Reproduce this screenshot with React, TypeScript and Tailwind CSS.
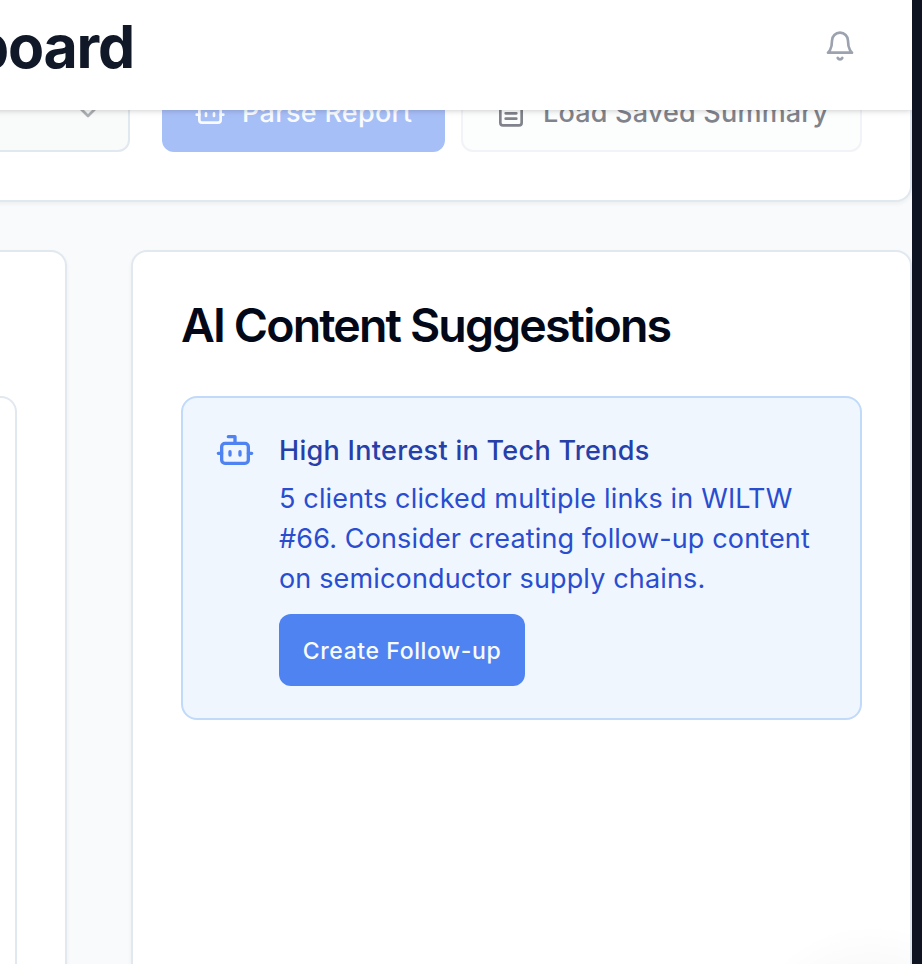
import React from "react";

type IconProps = { className?: string; children: React.ReactNode };

function Icon({ className = "", children }: IconProps) {
  return (
    <svg
      viewBox="0 0 24 24"
      fill="none"
      stroke="currentColor"
      strokeWidth={2}
      strokeLinecap="round"
      strokeLinejoin="round"
      className={`shrink-0 ${className}`}
    >
      {children}
    </svg>
  );
}

function BotIcon({ className }: { className?: string }) {
  return (
    <Icon className={className}>
      <path d="M12 8V4H8" />
      <rect width="16" height="12" x="4" y="8" rx="2" />
      <path d="M2 14h2M20 14h2M15 13v2M9 13v2" />
    </Icon>
  );
}

function BellIcon({ className }: { className?: string }) {
  return (
    <Icon className={className}>
      <path d="M6 8a6 6 0 0 1 12 0c0 7 3 9 3 9H3s3-2 3-9" />
      <path d="M10.3 21a1.94 1.94 0 0 0 3.4 0" />
    </Icon>
  );
}

function FileIcon({ className }: { className?: string }) {
  return (
    <Icon className={className}>
      <path d="M15 2H6a2 2 0 0 0-2 2v16a2 2 0 0 0 2 2h12a2 2 0 0 0 2-2V7Z" />
      <path d="M14 2v4a2 2 0 0 0 2 2h4M10 9H8M16 13H8M16 17H8" />
    </Icon>
  );
}

function ChevronIcon({ className }: { className?: string }) {
  return (
    <Icon className={className}>
      <path d="m6 9 6 6 6-6" />
    </Icon>
  );
}

function Header() {
  return (
    <header className="relative z-10 -ml-4 flex h-[110px] shrink-0 items-center bg-white pr-14 pl-4 shadow-[0_2px_6px_rgba(0,0,0,0.1),0_2px_4px_-2px_rgba(0,0,0,0.1)]">
      <div className="flex h-20 w-[134px] shrink-0 items-center justify-end overflow-hidden">
        <h1 className="-mt-4 text-[59px] leading-[72px] font-bold tracking-[-0.02em] whitespace-nowrap text-[#111827]">
          Dashboard
        </h1>
      </div>
      <BellIcon className="-mt-[18px] ml-auto size-8 text-[#9ca3af]" />
    </header>
  );
}

function Toolbar() {
  return (
    <section className="-mt-[38px] -ml-4 flex h-[130px] shrink-0 items-start rounded-br-2xl border-r-2 border-b-2 border-[#e2e8f0] bg-white pr-12 pl-4 shadow-[0_2px_4px_rgba(0,0,0,0.05)]">
      <div className="flex h-20 w-[130px] shrink-0 items-center justify-end rounded-r-xl border-2 border-l-0 border-[#e2e8f0] bg-[#f9fafa] pr-6">
        <ChevronIcon className="size-8 text-[#020817] opacity-30" />
      </div>
      <button className="ml-8 flex h-20 w-[283px] shrink-0 items-center gap-4 rounded-xl bg-[#a7bff7] pl-8 text-[27px] font-[450] tracking-[0.3px] whitespace-nowrap text-[#f9fbfe]">
        <BotIcon className="size-8" />
        <span className="pt-0.5">Parse Report</span>
      </button>
      <button className="ml-4 flex h-20 w-[401px] shrink-0 items-center gap-4 rounded-xl border-2 border-[#f1f3f8] bg-[#fcfdfd] pl-8 text-[27px] font-[450] tracking-[0.2px] whitespace-nowrap text-[#80838b]">
        <FileIcon className="size-8" />
        <span className="pt-0.5">Load Saved Summary</span>
      </button>
    </section>
  );
}

function Suggestion() {
  return (
    <article className="flex items-start gap-6 rounded-2xl border-2 border-[#c1daf9] bg-[#eff6fe] p-8">
      <BotIcon className="size-10 text-[#4f83f1]" />
      <div className="min-w-0">
        <h3 className="pt-px text-[27px] leading-10 font-[450] tracking-[0.3px] whitespace-nowrap text-[#263fa9]">
          High Interest in Tech Trends
        </h3>
        <p className="mt-2 text-[27px] leading-10 tracking-[0.15px] whitespace-nowrap text-[#2a4dd0]">
          5 clients clicked multiple links in WILTW
          <br />
          #66. Consider creating follow-up content
          <br />
          on semiconductor supply chains.
        </p>
        <button className="mt-[15px] flex h-[72px] w-[246px] items-center justify-center rounded-xl bg-[#4f83f1] pt-0.5 text-[23px] font-[450] tracking-[0.6px] whitespace-nowrap text-[#f8fafc]">
          Create Follow-up
        </button>
      </div>
    </article>
  );
}

export default function App() {
  return (
    <div className="flex h-[964px] w-[922px] overflow-hidden bg-[#0e1422] font-['Inter','Liberation_Sans',sans-serif]">
      <main className="relative flex w-[912px] shrink-0 flex-col overflow-hidden bg-[#f9fafb]">
        <Header />
        <Toolbar />
        <div className="mt-12 flex min-h-0 flex-1 gap-16">
          <section className="w-[67px] shrink-0 rounded-tr-2xl border-t-2 border-r-2 border-[#e2e8f0] bg-white pt-36 pr-12 shadow-[0_2px_4px_rgba(0,0,0,0.05)]">
            <div className="h-full rounded-tr-2xl border-t-2 border-r-2 border-[#e2e8f0]" />
          </section>
          <section className="min-w-0 flex-1 rounded-t-2xl border-2 border-b-0 border-[#e2e8f0] bg-white px-12 pt-12 shadow-[0_2px_4px_rgba(0,0,0,0.05)]">
            <h2 className="mb-[47px] pt-px text-[46.5px] leading-[48px] font-semibold tracking-[-1.87px] whitespace-nowrap text-[#020817]">
              AI Content Suggestions
            </h2>
            <Suggestion />
          </section>
        </div>
        <div className="pointer-events-none absolute right-[-80px] bottom-[-170px] h-[210px] w-[240px] bg-[radial-gradient(closest-side,rgba(0,0,0,0.05),transparent)]" />
      </main>
    </div>
  );
}
